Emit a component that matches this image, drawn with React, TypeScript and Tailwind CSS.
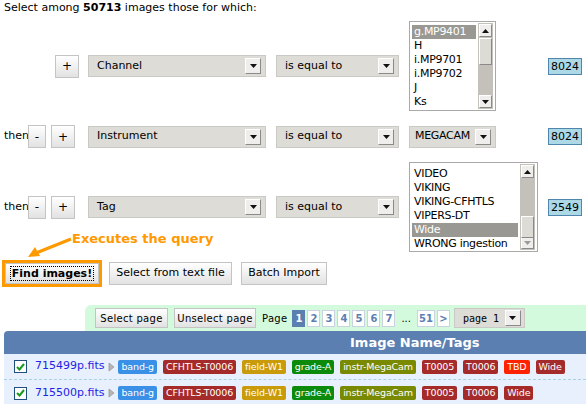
import React from "react";

type Opt = { label: string; selected?: boolean };

const font = { fontFamily: "'DejaVu Sans', Verdana, sans-serif" };

function SmallButton({ children, className = "" }: { children: React.ReactNode; className?: string }) {
    return (
        <div
            className={
                "flex shrink-0 items-center justify-center whitespace-nowrap border border-[#c4c4c4] bg-gradient-to-b from-white to-[#e2e2e2] text-black " +
                className
            }
        >
            {children}
        </div>
    );
}

function ArrowBox() {
    return (
        <div className="flex h-[16px] w-[16px] shrink-0 items-center justify-center border border-t-white border-l-white border-r-[#8a8a8a] border-b-[#8a8a8a] bg-[#efeeec]">
            <svg width="7" height="4" viewBox="0 0 7 4">
                <path d="M0 0h7L3.5 4z" fill="#111" />
            </svg>
        </div>
    );
}

function DropSelect({ label, className = "" }: { label: string; className?: string }) {
    return (
        <div
            className={
                "flex h-[22px] shrink-0 items-center justify-between whitespace-nowrap border border-[#c9c9c5] bg-[#dddcd7] pr-[4px] text-[11px] text-black " +
                className
            }
        >
            <span>{label}</span>
            <ArrowBox />
        </div>
    );
}

function ScrollArrow({ up, dim }: { up?: boolean; dim?: boolean }) {
    return (
        <div className="flex h-[13px] w-[13px] items-center justify-center border border-t-white border-l-white border-r-[#8a8a8a] border-b-[#8a8a8a] bg-[#efeeec]">
            <svg width="7" height="4" viewBox="0 0 7 4">
                <path d={up ? "M0 4h7L3.5 0z" : "M0 0h7L3.5 4z"} fill={dim ? "#9a9a9a" : "#111"} />
            </svg>
        </div>
    );
}

function ListBox({
    options,
    width,
    thumbTop,
    thumbHeight,
    offset = 0,
    dimDown,
}: {
    options: Opt[];
    width: string;
    thumbTop: number;
    thumbHeight: number;
    offset?: number;
    dimDown?: boolean;
}) {
    return (
        <div className={"flex h-[90px] border border-[#a9a9a9] bg-white px-[2px] py-[1px] " + width}>
            <div className="flex-1 overflow-hidden pt-[1px]">
                <div style={{ marginTop: offset }}>
                    {options.map((o, i) => (
                        <div
                            key={i}
                            className={
                                "h-[14px] pl-[2px] text-[11px] leading-[14px] tracking-[-0.3px] whitespace-nowrap " +
                                (o.selected ? "bg-[#9a9892] text-white" : "text-black")
                            }
                        >
                            {o.label}
                        </div>
                    ))}
                </div>
            </div>
            <div className="relative ml-[2px] flex w-[15px] shrink-0 flex-col justify-between bg-[#c3c1ba] p-[1px]">
                <ScrollArrow up />
                <div
                    className="absolute left-[1px] w-[13px] border border-t-white border-l-white border-r-[#8a8a8a] border-b-[#8a8a8a] bg-[#dddbd6]"
                    style={{ top: thumbTop, height: thumbHeight }}
                />
                <ScrollArrow dim={dimDown} />
            </div>
        </div>
    );
}

function Count({ value }: { value: string }) {
    return (
        <div className="border border-[#4f86ad] bg-[#add8e6] px-[2px] text-[11px] leading-[15px] text-black">
            {value}
        </div>
    );
}

function QueryRow({
    first,
    field,
    value,
    count,
    height,
}: {
    first?: boolean;
    field: string;
    value: React.ReactNode;
    count: string;
    height: string;
}) {
    return (
        <div className={"flex items-center " + height}>
            <div className="flex w-[79px] shrink-0 items-center">
                {first ? (
                    <div className="w-[55px]" />
                ) : (
                    <>
                        <span className="w-[28px] pl-[4px] text-[11px]">then</span>
                        <SmallButton className="h-[23px] w-[18px] text-[12px]">-</SmallButton>
                        <div className="w-[5px]" />
                    </>
                )}
                <SmallButton className="h-[23px] w-[24px] text-[12px]">+</SmallButton>
            </div>
            <DropSelect label={field} className="ml-[9px] w-[178px] pl-[8px]" />
            <DropSelect label="is equal to" className="ml-[10px] w-[123px] pl-[8px]" />
            <div className="ml-[10px] w-[129px] shrink-0">{value}</div>
            <div className="ml-[10px]">
                <Count value={count} />
            </div>
        </div>
    );
}

const tags: { name: string; color: string }[] = [
    { name: "band-g", color: "bg-[#3a8fe6]" },
    { name: "CFHTLS-T0006", color: "bg-[#a52b2b]" },
    { name: "field-W1", color: "bg-[#c99a0a]" },
    { name: "grade-A", color: "bg-[#0b8a0b]" },
    { name: "instr-MegaCam", color: "bg-[#7a8a00]" },
    { name: "T0005", color: "bg-[#a52b2b]" },
    { name: "T0006", color: "bg-[#a52b2b]" },
    { name: "TBD", color: "bg-[#ff2200]" },
    { name: "Wide", color: "bg-[#a52b2b]" },
];

function ImageRow({ name, hasTbd, last }: { name: string; hasTbd?: boolean; last?: boolean }) {
    return (
        <div
            className={
                "flex h-[26px] items-center whitespace-nowrap bg-[#e7f0fc] pl-[10px] " +
                (last ? "" : "border-b border-dashed border-[#aad0e4]")
            }
        >
            <div className="flex h-[13px] w-[13px] shrink-0 items-center justify-center border border-[#1f4f7a] bg-white">
                <svg width="9" height="8" viewBox="0 0 9 8">
                    <path d="M1 4l2.5 2.5L8 1" stroke="#1a9a1a" strokeWidth="2" fill="none" />
                </svg>
            </div>
            <span className="ml-[8px] shrink-0 text-[11px] text-[#2323e6]">{name}</span>
            <svg width="8" height="10" viewBox="0 0 8 10" className="ml-[4px] shrink-0">
                <path d="M1 1l5 4-5 4z" fill="#b5b5b5" stroke="#999" strokeWidth="0.8" />
            </svg>
            <div className="ml-[2px] flex shrink-0 gap-[6px]">
                {tags
                    .filter((t) => hasTbd || t.name !== "TBD")
                    .map((t) => (
                        <span
                            key={t.name}
                            className={
                                "shrink-0 whitespace-nowrap rounded-[2px] px-[3px] text-[9.5px] leading-[14px] tracking-[-0.15px] text-white " +
                                t.color
                            }
                        >
                            {t.name}
                        </span>
                    ))}
            </div>
        </div>
    );
}

function PageBox({ n, active }: { n: string; active?: boolean }) {
    return (
        <div
            className={
                "flex h-[17px] min-w-[13px] items-center justify-center border px-[1px] text-[10px] font-bold " +
                (active ? "border-[#5b7fb1] bg-[#5b7fb1] text-white" : "border-[#cbd3e0] bg-white text-[#5b7fb1]")
            }
        >
            {n}
        </div>
    );
}

export default function App() {
    return (
        <div className="h-[404px] w-[586px] overflow-hidden bg-white text-black" style={font}>
            <div className="pl-[4px] pt-[1px] text-[11px] leading-[14px]">
                Select among <b>50713</b> images those for which:
            </div>

            <div className="mt-[6px] flex flex-col gap-[14px]">
                <QueryRow
                    first
                    field="Channel"
                    count="8024"
                    height="h-[90px]"
                    value={
                        <ListBox
                            width="w-[87px]"
                            thumbTop={15}
                            thumbHeight={27}
                            offset={1}
                            options={[
                                { label: "g.MP9401", selected: true },
                                { label: "H" },
                                { label: "i.MP9701" },
                                { label: "i.MP9702" },
                                { label: "J" },
                                { label: "Ks" },
                            ]}
                        />
                    }
                />
                <QueryRow
                    field="Instrument"
                    count="8024"
                    height="h-[23px]"
                    value={<DropSelect label="MEGACAM" className="w-[87px] pl-[5px] tracking-[-0.3px]" />}
                />
                <QueryRow
                    field="Tag"
                    count="2549"
                    height="h-[90px]"
                    value={
                        <ListBox
                            width="w-[129px]"
                            thumbTop={52}
                            thumbHeight={22}
                            offset={-12}
                            dimDown
                            options={[
                                { label: "VERY" },
                                { label: "VIDEO" },
                                { label: "VIKING" },
                                { label: "VIKING-CFHTLS" },
                                { label: "VIPERS-DT" },
                                { label: "Wide", selected: true },
                                { label: "WRONG ingestion" },
                            ]}
                        />
                    }
                />
            </div>

            <div className="relative mt-[8px] flex items-center">
                <span className="absolute left-[72px] top-[-31px] whitespace-nowrap text-[13px] font-bold text-[#ff9900]">
                    Executes the query
                </span>
                <svg className="absolute left-[24px] top-[-24px]" width="50" height="24" viewBox="0 0 50 24">
                    <path d="M47 3L12 17" stroke="#ff9900" strokeWidth="3" fill="none" />
                    <path d="M4 21l7-10 5 9z" fill="#ff9900" />
                </svg>
                <div className="ml-[2px] border-[3px] border-[#ff9900]">
                    <SmallButton className="h-[21px] w-[94px]">
                        <span className="border border-dotted border-black px-[1px] text-[11px] font-bold leading-[13px]">
                            Find images!
                        </span>
                    </SmallButton>
                </div>
                <SmallButton className="ml-[7px] h-[23px] w-[123px] text-[11px]">Select from text file</SmallButton>
                <SmallButton className="ml-[9px] h-[23px] w-[86px] text-[11px]">Batch Import</SmallButton>
            </div>

            <div className="mt-[18px] ml-[85px] flex h-[26px] items-center whitespace-nowrap rounded-tl-[6px] bg-[#d4fadd] pl-[10px] text-[10px]">
                <SmallButton className="h-[20px] w-[73px] text-[10px] tracking-[0.3px]">Select page</SmallButton>
                <SmallButton className="ml-[6px] h-[20px] w-[82px] text-[10px] tracking-[0.3px]">Unselect page</SmallButton>
                <span className="ml-[6px] mr-[5px] tracking-[0.3px]">Page</span>
                <div className="flex items-center gap-[2px]">
                    <PageBox n="1" active />
                    <PageBox n="2" />
                    <PageBox n="3" />
                    <PageBox n="4" />
                    <PageBox n="5" />
                    <PageBox n="6" />
                    <PageBox n="7" />
                    <span className="mx-[4px]">...</span>
                    <PageBox n="51" />
                    <PageBox n=">" />
                </div>
                <div
                    className="ml-[4px] flex h-[20px] w-[71px] shrink-0 items-center justify-between border border-[#c9c9c5] bg-[#dddcd7] pl-[8px] pr-[3px] text-[10px]"
                    style={{ fontFamily: "'DejaVu Sans Mono', monospace" }}
                >
                    <span>page 1</span>
                    <ArrowBox />
                </div>
            </div>

            <div className="ml-[4px] flex h-[23px] items-center rounded-tl-[4px] bg-[#5b7fb1] pl-[346px] text-[13px] font-bold text-white">
                Image Name/Tags
            </div>
            <div className="ml-[4px]">
                <ImageRow name="715499p.fits" hasTbd />
                <ImageRow name="715500p.fits" last />
            </div>
        </div>
    );
}
